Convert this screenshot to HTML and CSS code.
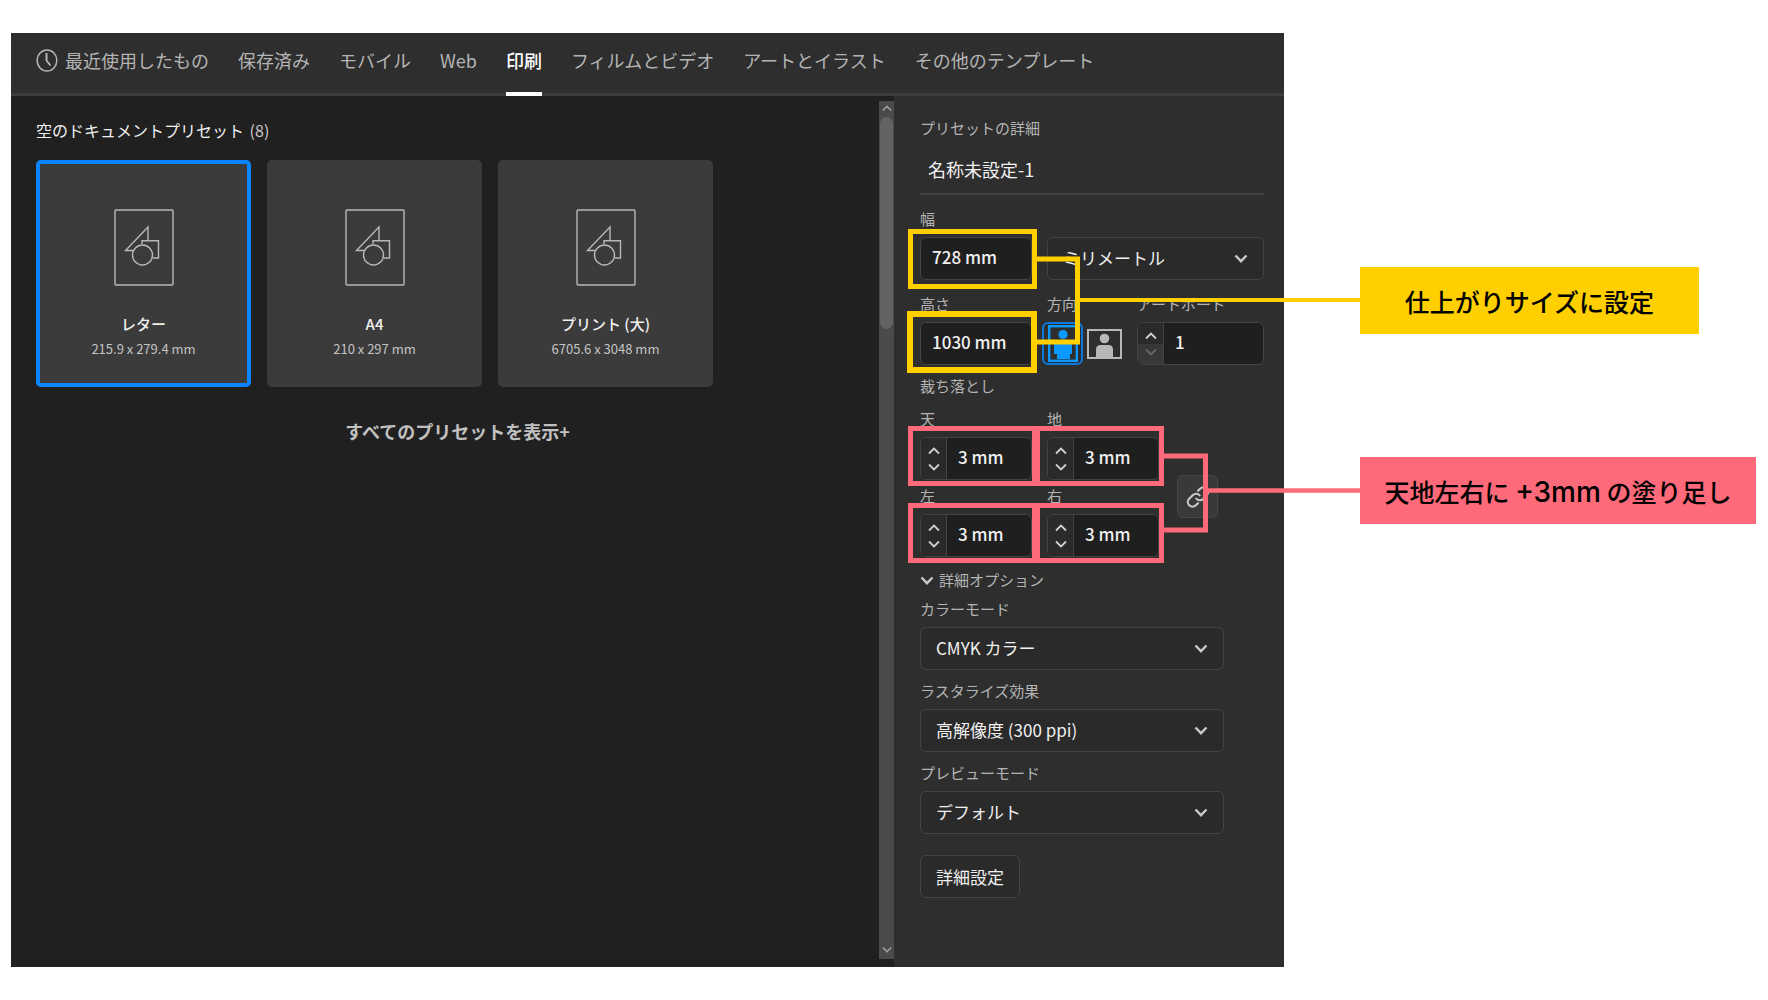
FILE: index.html
```html
<!DOCTYPE html>
<html lang="ja">
<head>
<meta charset="utf-8">
<meta name="viewport" content="width=device-width, initial-scale=1">
<title>新規ドキュメント</title>
<link rel="stylesheet" href="styles.css">
</head>
<body>
<svg class="defs" width="0" height="0" aria-hidden="true">
  <symbol id="chevron" viewBox="0 0 14 9"><path d="M1.5 1.5 7 7.2l5.5-5.7" fill="none" stroke="currentColor" stroke-width="2.4"/></symbol>
  <symbol id="up" viewBox="0 0 12 8"><path d="M1 6.5 6 1.5l5 5" fill="none" stroke="currentColor" stroke-width="1.8"/></symbol>
  <symbol id="down" viewBox="0 0 12 8"><path d="m1 1.5 5 5 5-5" fill="none" stroke="currentColor" stroke-width="1.8"/></symbol>
  <symbol id="artwork" viewBox="0 0 60 77">
    <g fill="none" stroke="currentColor" stroke-width="1.4">
      <rect x="1" y="1" width="58" height="75" rx="1"/>
      <path d="M20 41.5h-8.500L34 18v13.500M28 35v-3.300h16.500V49H39"/>
      <circle cx="28.500" cy="46" r="10"/>
    </g>
  </symbol>
</svg>

<div class="page">
  <main class="window">
    <nav class="tabs" aria-label="カテゴリ">
      <a class="tab tab-recent" href="#recent"><svg width="22" height="23" viewBox="0 0 22 23" fill="none" stroke="currentColor" stroke-width="1.500"><ellipse cx="11" cy="11.500" rx="9.800" ry="10.500"/><path d="M10.500 4v7.500l4 5" stroke-width="2"/></svg>最近使用したもの</a>
      <a class="tab" href="#saved">保存済み</a>
      <a class="tab" href="#mobile">モバイル</a>
      <a class="tab" href="#web">Web</a>
      <a class="tab tab-active" href="#print" aria-current="page">印刷</a>
      <a class="tab" href="#film">フィルムとビデオ</a>
      <a class="tab" href="#art">アートとイラスト</a>
      <a class="tab" href="#templates">その他のテンプレート</a>
    </nav>

    <div class="content">
      <section class="presets">
        <h1 class="presets-title">空のドキュメントプリセット <span class="count">(8)</span></h1>
        <div class="cards">
          <button class="card card-selected" type="button"><svg class="card-icon"><use href="#artwork"/></svg><span class="card-name">レター</span><span class="card-size">215.9 x 279.4 mm</span></button>
          <button class="card" type="button"><svg class="card-icon"><use href="#artwork"/></svg><span class="card-name">A4</span><span class="card-size">210 x 297 mm</span></button>
          <button class="card" type="button"><svg class="card-icon"><use href="#artwork"/></svg><span class="card-name">プリント (大)</span><span class="card-size">6705.6 x 3048 mm</span></button>
        </div>
        <button class="show-all" type="button">すべてのプリセットを表示+</button>
      </section>

      <div class="scrollbar" aria-hidden="true">
        <svg class="scroll-arrow"><use href="#up"/></svg>
        <div class="thumb"></div>
        <svg class="scroll-arrow scroll-end"><use href="#down"/></svg>
      </div>

      <form class="details">
        <label class="label" for="doc-name">プリセットの詳細</label>
        <input class="name" id="doc-name" type="text" value="名称未設定-1">

        <div class="row size-row">
          <div class="field">
            <label class="label" for="width">幅</label>
            <div class="mark mark-yellow"><input class="box" id="width" type="text" value="728 mm"></div>
          </div>
          <div class="field unit">
            <div class="select"><select class="box" aria-label="単位"><option>ミリメートル</option></select><svg class="chevron"><use href="#chevron"/></svg></div>
          </div>
        </div>

        <div class="row size-row">
          <div class="field">
            <label class="label" for="height">高さ</label>
            <div class="mark mark-yellow mark-thick"><input class="box" id="height" type="text" value="1030 mm"></div>
          </div>
          <div class="field" role="radiogroup" aria-labelledby="orient">
            <span class="label" id="orient">方向</span>
            <div class="orients">
              <label class="orient"><input type="radio" name="orient" aria-label="縦" checked><svg width="30" height="37" viewBox="0 0 30 37"><rect x="1.200" y="1.200" width="27.600" height="34.600" fill="none" stroke="currentColor" stroke-width="2.400"/><circle cx="15" cy="9.500" r="4.600" fill="currentColor"/><path d="M10 16h10q4 0 4 4v9h-2v5H9v-5H6v-9q0-4 4-4z" fill="currentColor"/></svg></label>
              <label class="orient"><input type="radio" name="orient" aria-label="横"><svg width="35" height="30" viewBox="0 0 35 30"><rect x="1" y="1" width="33" height="28" fill="none" stroke="currentColor" stroke-width="2"/><circle cx="17.500" cy="9.500" r="4.800" fill="currentColor"/><path d="M13.500 16h8q4.500 0 4.500 4.500V29H9v-8.500Q9 16 13.500 16z" fill="currentColor"/></svg></label>
            </div>
          </div>
          <div class="field">
            <label class="label" for="artboards">アートボード</label>
            <div class="stepper">
              <div class="steps"><button type="button" aria-label="増やす"><svg><use href="#up"/></svg></button><button type="button" aria-label="減らす" disabled><svg><use href="#down"/></svg></button></div>
              <input id="artboards" type="text" value="1">
            </div>
          </div>
        </div>

        <h2 class="label bleed-title">裁ち落とし</h2>
        <div class="bleed">
          <div class="bleed-grid">
            <div class="field">
              <label class="label" for="top">天</label>
              <div class="mark mark-pink"><div class="stepper"><div class="steps"><button type="button" aria-label="増やす"><svg><use href="#up"/></svg></button><button type="button" aria-label="減らす"><svg><use href="#down"/></svg></button></div><input id="top" type="text" value="3 mm"></div></div>
            </div>
            <div class="field">
              <label class="label" for="bottom">地</label>
              <div class="mark mark-pink"><div class="stepper"><div class="steps"><button type="button" aria-label="増やす"><svg><use href="#up"/></svg></button><button type="button" aria-label="減らす"><svg><use href="#down"/></svg></button></div><input id="bottom" type="text" value="3 mm"></div></div>
            </div>
            <div class="field">
              <label class="label" for="left">左</label>
              <div class="mark mark-pink"><div class="stepper"><div class="steps"><button type="button" aria-label="増やす"><svg><use href="#up"/></svg></button><button type="button" aria-label="減らす"><svg><use href="#down"/></svg></button></div><input id="left" type="text" value="3 mm"></div></div>
            </div>
            <div class="field">
              <label class="label" for="right">右</label>
              <div class="mark mark-pink"><div class="stepper"><div class="steps"><button type="button" aria-label="増やす"><svg><use href="#up"/></svg></button><button type="button" aria-label="減らす"><svg><use href="#down"/></svg></button></div><input id="right" type="text" value="3 mm"></div></div>
            </div>
          </div>
          <button class="link" type="button" aria-label="すべての設定を同一にする"><svg width="26" height="26" viewBox="0 0 24 24" fill="none" stroke="currentColor" stroke-width="2" stroke-linecap="round"><path d="M10.500 13.500a4.300 4.300 0 0 0 6.200.3l3.400-3.400a4.300 4.300 0 0 0-6.100-6.100L12 6.300M13.500 10.500a4.300 4.300 0 0 0-6.200-.3l-3.400 3.400a4.300 4.300 0 0 0 6.100 6.100l2-2"/></svg></button>
        </div>

        <button class="disclosure" type="button" aria-expanded="true"><svg class="chevron"><use href="#chevron"/></svg>詳細オプション</button>

        <div class="options">
          <div class="field">
            <label class="label" for="color">カラーモード</label>
            <div class="select"><select class="box" id="color"><option>CMYK カラー</option></select><svg class="chevron"><use href="#chevron"/></svg></div>
          </div>
          <div class="field">
            <label class="label" for="raster">ラスタライズ効果</label>
            <div class="select"><select class="box" id="raster"><option>高解像度 (300 ppi)</option></select><svg class="chevron"><use href="#chevron"/></svg></div>
          </div>
          <div class="field">
            <label class="label" for="preview">プレビューモード</label>
            <div class="select"><select class="box" id="preview"><option>デフォルト</option></select><svg class="chevron"><use href="#chevron"/></svg></div>
          </div>
        </div>
        <button class="more" type="button">詳細設定</button>

        <svg class="connectors" width="466" height="450" viewBox="0 0 466 450" fill="none" aria-hidden="true">
          <g class="line-yellow"><path d="M142 163h41.500v83H142" stroke-width="5"/><path d="M184 204h282" stroke-width="4"/></g>
          <g class="line-pink"><path d="M270 360h41.500v74H270" stroke-width="5"/><path d="M312 394.500h154" stroke-width="4.500"/></g>
        </svg>
      </form>
    </div>
  </main>

  <aside class="notes">
    <p class="note note-yellow">仕上がりサイズに設定</p>
    <p class="note note-pink">天地左右に <span class="latin">+3mm</span> の塗り足し</p>
  </aside>
</div>
</body>
</html>
```

FILE: styles.css
```css
:root {
  --panel: #2e2e2e;
  --dark: #202020;
  --box: #2a2a2a;
  --line: #434343;
  --text: #f0f0f0;
  --muted: #b4b4b4;
  --yellow: #ffcf00;
  --pink: #ff6a7a;
  --blue: #0a84ff;
}

* { box-sizing: border-box; }

body {
  margin: 0;
  background: #fff;
  color: var(--text);
  font-family: "Noto Sans CJK JP", "Noto Sans", sans-serif;
  font-size: 17px;
}

button, input, select {
  margin: 0;
  padding: 0;
  border: 0;
  border-radius: 0;
  background: none;
  color: inherit;
  font: inherit;
}

.defs { position: absolute; }

.page {
  display: flex;
  align-items: flex-start;
  gap: 76px;
  padding: 33px 12px 33px 11px;
}

.window {
  flex: 1;
  min-width: 0;
  background: var(--panel);
}

/* Category tabs */
.tabs {
  display: flex;
  gap: 29px;
  padding: 0 25px;
  border-bottom: 3px solid #3c3c3c;
}

.tab {
  display: flex;
  align-items: center;
  height: 60px;
  padding-bottom: 6px;
  color: var(--muted);
  font-size: 18px;
  line-height: 24px;
  text-decoration: none;
  white-space: nowrap;
}

.tab-recent { gap: 7px; }

.tab-active {
  height: 63px;
  margin-bottom: -3px;
  padding-bottom: 5px;
  border-bottom: 4px solid #fff;
  color: #fff;
  font-weight: 500;
}

.content {
  display: grid;
  grid-template-columns: 1fr 15px 390px;
}

/* Preset list */
.presets {
  padding: 23px 0 0 25px;
  background: var(--dark);
}

.presets-title {
  margin: 0 0 19px;
  font-size: 16px;
  font-weight: 400;
  line-height: 22px;
}

.count {
  padding-left: 2px;
  color: #c8c8c8;
}

.cards {
  display: grid;
  grid-template-columns: repeat(auto-fill, 215px);
  gap: 16px;
}

.card {
  display: flex;
  flex-direction: column;
  align-items: center;
  height: 227px;
  padding-top: 49px;
  border-radius: 5px;
  background: #3b3b3b;
}

.card-selected { box-shadow: inset 0 0 0 4px var(--blue); }

.card-icon {
  width: 60px;
  height: 77px;
  margin-bottom: 26px;
  color: #b8b8b8;
}

.card-name {
  font-size: 15px;
  font-weight: 500;
  line-height: 24px;
}

.card-size {
  color: #c4c4c4;
  font-size: 13px;
  line-height: 26px;
}

.show-all {
  display: block;
  margin: 32px auto 0;
  color: #c0c0c0;
  font-size: 18px;
  font-weight: 700;
  line-height: 24px;
}

.scrollbar {
  display: flex;
  flex-direction: column;
  align-items: center;
  margin: 0;
  border-top: 5px solid var(--dark);
  border-bottom: 8px solid var(--dark);
  background: #4a4a4a;
}

.scroll-arrow {
  width: 10px;
  height: 7px;
  margin: 4px 0 5px;
  color: #a0a0a0;
}

.scroll-end { margin: auto 0 6px; }

.thumb {
  width: 13px;
  height: 212px;
  border-radius: 7px;
  background: #636363;
}

/* Preset details */
.details {
  position: relative;
  padding: 23px 20px 69px 26px;
}

.label {
  display: block;
  margin: 0;
  padding-bottom: 2px;
  color: var(--muted);
  font-size: 15px;
  font-weight: 400;
  line-height: 18px;
}

.name {
  display: block;
  width: 100%;
  height: 50px;
  margin: 6px 0 15px;
  padding-left: 8px;
  border-bottom: 2px solid var(--line);
  font-size: 18px;
}

.row {
  display: grid;
  grid-template-columns: 112px 75px 1fr;
  gap: 15px;
  margin-bottom: 15px;
}

.field {
  display: flex;
  flex-direction: column;
  gap: 7px;
  min-width: 0;
}

.unit {
  grid-column: 2 / 4;
  justify-content: flex-end;
}

.box {
  display: block;
  width: 100%;
  height: 43px;
  border: 1px solid var(--line);
  border-radius: 6px;
}

input.box {
  padding: 0 0 5px 11px;
  background: #1f1f1f;
  font-weight: 500;
}

.select {
  display: grid;
  align-items: center;
}

.select > * { grid-area: 1 / 1; }

select.box {
  padding: 0 40px 2px 15px;
  background: var(--box);
  appearance: none;
}

.chevron {
  width: 14px;
  height: 9px;
  color: #c8c8c8;
}

.select .chevron {
  justify-self: end;
  margin-right: 16px;
  pointer-events: none;
}

.stepper {
  display: flex;
  height: 43px;
  border: 1px solid var(--line);
  border-radius: 6px;
  background: #1f1f1f;
  overflow: hidden;
}

.stepper input {
  flex: 1;
  min-width: 0;
  padding: 0 0 5px 11px;
  font-weight: 500;
}

.steps {
  display: flex;
  flex-direction: column;
  flex: 0 0 26px;
  border-right: 1px solid var(--line);
  background: var(--box);
}

.steps button {
  display: flex;
  flex: 1;
  align-items: flex-start;
  justify-content: center;
  padding: 4px 0;
  color: #d0d0d0;
}

.steps button:first-child { align-items: flex-end; }

.steps button:disabled {
  background: #383838;
  color: #666;
}

.steps svg {
  width: 12px;
  height: 8px;
}

/* Orientation */
.orients {
  display: flex;
  gap: 2px;
  margin: 0 -5px;
}

.orient {
  display: grid;
  flex: 0 0 41px;
  height: 43px;
  place-items: center;
  border: 2px solid transparent;
  border-radius: 6px;
  color: #b8b8b8;
}

.orient > * { grid-area: 1 / 1; }

.orient input {
  width: 100%;
  height: 100%;
  appearance: none;
}

.orient:has(:checked) {
  border-color: #0a78dc;
  color: #0a9aff;
}

.orient + .orient { flex-basis: 37px; }

/* Bleed */
.bleed-title { margin: -3px 0 13px; }

.bleed {
  display: flex;
  align-items: center;
  gap: 18px;
}

.bleed-grid {
  display: grid;
  grid-template-columns: 112px 112px;
  gap: 7px 15px;
}

.link {
  display: grid;
  width: 41px;
  height: 43px;
  margin-top: 26px;
  place-items: center;
  border: 1px solid #464646;
  border-radius: 6px;
  background: #393939;
  color: #c8c8c8;
}

.disclosure {
  display: flex;
  align-items: center;
  gap: 5px;
  margin: 13px 0 10px;
  color: var(--muted);
  font-size: 15px;
  line-height: 20px;
}

.options {
  display: grid;
  gap: 12px;
  width: 304px;
}

.more {
  height: 43px;
  margin-top: 21px;
  padding: 0 15px;
  border: 1px solid var(--line);
  border-radius: 6px;
  background: var(--box);
}

/* Highlight frames drawn over the fields */
.mark { position: relative; }

.mark::after {
  content: "";
  position: absolute;
  z-index: 1;
  inset: -11px -5px -6px -12px;
  border: 5px solid var(--pink);
  pointer-events: none;
}

.mark-yellow::after {
  inset: -8px -5px -9px -12px;
  border-color: var(--yellow);
}

.mark-thick::after {
  inset: -11px -5px -8px -13px;
  border-width: 6px;
}

.connectors {
  position: absolute;
  z-index: 2;
  top: 0;
  left: 0;
  pointer-events: none;
}

.line-yellow { stroke: var(--yellow); }
.line-pink { stroke: var(--pink); }

/* Callouts */
.notes {
  display: flex;
  flex: 0 0 396px;
  flex-direction: column;
  align-items: flex-start;
  gap: 123px;
  padding-top: 234px;
}

.note {
  width: 100%;
  height: 67px;
  margin: 0;
  padding-top: 2px;
  background: var(--pink);
  color: #000;
  font-size: 25px;
  font-weight: 500;
  line-height: 65px;
  text-align: center;
  white-space: nowrap;
}

.note-yellow {
  width: 339px;
  background: var(--yellow);
}

.latin {
  font-family: Inter, sans-serif;
  font-size: 28px;
}
```
